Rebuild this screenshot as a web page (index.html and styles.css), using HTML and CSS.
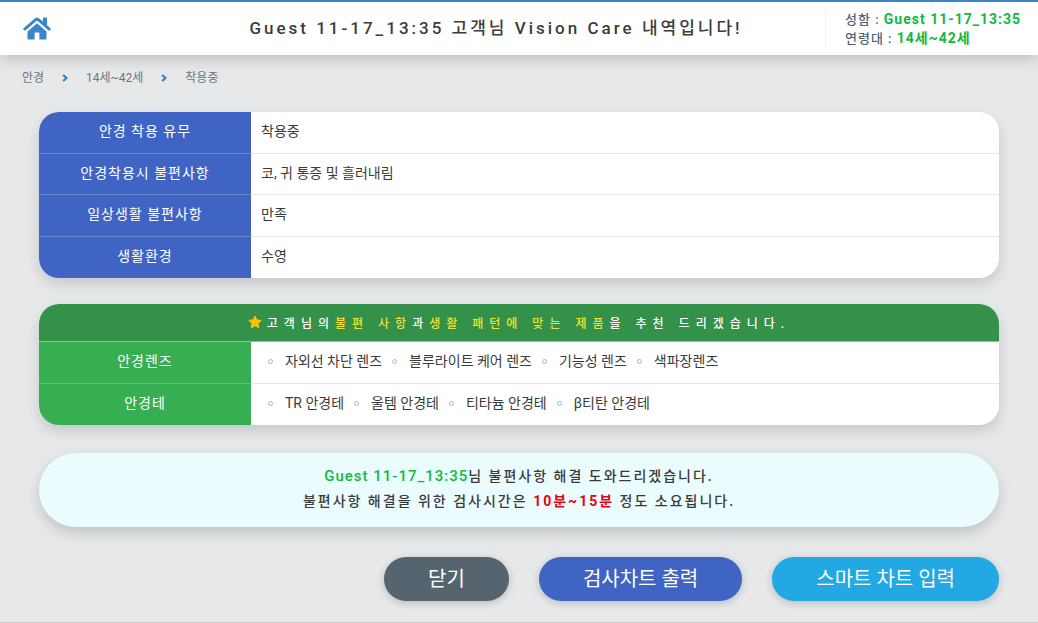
FILE: index.html
```html
<!DOCTYPE html>
<html lang="ko">
<head>
<meta charset="utf-8">
<meta name="viewport" content="width=device-width, initial-scale=1">
<title>Vision Care</title>
<link rel="stylesheet" href="styles.css">
</head>
<body>
<header class="topbar">
  <a class="home" href="#" aria-label="홈">
    <svg viewBox="0 0 28 23" width="28" height="23" aria-hidden="true">
      <path fill="#3a86c8" d="M14 0.5c-.8 0-1.300.2-1.900.7L.5 11.200c-.4.400-.4.800-.1 1.200l.8.900c.3.400.8.400 1.200.1L13.300 4.100c.4-.3 1-.3 1.400 0l10.900 9.300c.4.300.9.300 1.200-.1l.8-.9c.3-.4.300-.8-.1-1.200L24 8.200V1.300c0-.4-.3-.7-.7-.7h-2.600c-.4 0-.7.300-.7.700v3.300L15.900 1.200C15.300.7 14.800.5 14 .5z"/>
      <path fill="#3a86c8" d="M14 6.300 4.500 14.400v7.100c0 .6.400 1 1 1h6.100v-6.300c0-.4.300-.7.700-.7h3.400c.4 0 .7.300.7.700v6.300h6.100c.6 0 1-.4 1-1v-7.100z"/>
    </svg>
  </a>
  <h1 class="title">Guest 11-17_13:35 고객님 Vision Care 내역입니다!</h1>
  <div class="guest">
    <div>성함 : <strong>Guest 11-17_13:35</strong></div>
    <div>연령대 : <strong>14세~42세</strong></div>
  </div>
</header>
<nav class="crumbs" aria-label="경로">
  <a href="#">안경</a>
  <svg class="chevron" viewBox="0 0 6 8" width="6" height="8" aria-hidden="true"><path d="M1.200.9 4.500 4 1.200 7.100"/></svg>
  <a href="#">14세~42세</a>
  <svg class="chevron" viewBox="0 0 6 8" width="6" height="8" aria-hidden="true"><path d="M1.200.9 4.500 4 1.200 7.100"/></svg>
  <a href="#">착용중</a>
</nav>
<main class="content">
  <section class="card">
    <table class="info blue">
      <tbody>
        <tr><th scope="row">안경 착용 유무</th><td>착용중</td></tr>
        <tr><th scope="row">안경착용시 불편사항</th><td>코, 귀 통증 및 흘러내림</td></tr>
        <tr><th scope="row">일상생활 불편사항</th><td>만족</td></tr>
        <tr><th scope="row">생활환경</th><td>수영</td></tr>
      </tbody>
    </table>
  </section>
  <section class="card">
    <h2 class="banner">
      <svg viewBox="0 0 14 14" width="14" height="14" aria-hidden="true"><path fill="#ffc107" stroke="#ffc107" stroke-linejoin="round" d="M7 1l1.800 3.900 4.400.5-3.200 3 .8 4.400L7 10.700l-3.800 2.100.8-4.400-3.200-3 4.400-.5z"/></svg>
      <span>고객님의<em>불편 사항</em>과<em>생활 패턴에 맞는 제품</em>을 추천 드리겠습니다.</span>
    </h2>
    <table class="info green">
      <tbody>
        <tr><th scope="row">안경렌즈</th><td><ul class="options"><li>자외선 차단 렌즈</li><li>블루라이트 케어 렌즈</li><li>기능성 렌즈</li><li>색파장렌즈</li></ul></td></tr>
        <tr><th scope="row">안경테</th><td><ul class="options"><li>TR 안경테</li><li>울템 안경테</li><li>티타늄 안경테</li><li>β티탄 안경테</li></ul></td></tr>
      </tbody>
    </table>
  </section>
  <p class="notice"><strong class="name">Guest 11-17_13:35</strong>님 불편사항 해결 도와드리겠습니다.<br>불편사항 해결을 위한 검사시간은 <strong class="time">10분~15분</strong> 정도 소요됩니다.</p>
  <div class="actions">
    <button type="button" class="close">닫기</button>
    <button type="button" class="print">검사차트 출력</button>
    <button type="button" class="chart">스마트 차트 입력</button>
  </div>
</main>
</body>
</html>
```
FILE: styles.css
```css
*, *::before { box-sizing: border-box; }

body {
  margin: 0;
  min-height: 100vh;
  background: #e6e8ea;
  border-bottom: 1px solid #cbcdd4;
  color: #3a3a3a;
  font-family: Roboto, "Noto Sans CJK KR", sans-serif;
  font-size: 14px;
}

a { color: inherit; text-decoration: none; }

.topbar {
  display: grid;
  grid-template-columns: 167px 1fr 213px;
  align-items: center;
  height: 55px;
  background: #fff;
  border-top: 2px solid #3a86c8;
  box-shadow: 0 4px 14px rgba(0, 0, 0, .18);
}

.home { display: flex; padding-left: 23px; }

.title {
  margin: 0;
  padding-bottom: 4px;
  text-align: center;
  white-space: nowrap;
  color: #3c3c3c;
  font-size: 17px;
  font-weight: 500;
  letter-spacing: 3px;
}

.guest {
  padding-left: 19px;
  border-left: 1px solid #eee;
  color: #566270;
  font-size: 13px;
  font-weight: 500;
  line-height: 18px;
  letter-spacing: 1px;
  white-space: nowrap;
}

.guest strong { color: #0fba3e; font-size: 14px; font-weight: 700; }

.crumbs {
  display: flex;
  align-items: center;
  gap: 18px;
  padding: 13px 22px 0;
  color: #6c757d;
  font-size: 12px;
  line-height: 20px;
}

.chevron { fill: none; stroke: #2f7fc6; stroke-width: 2; }

.content { padding: 24px 39px 20px; }

.card {
  margin-bottom: 26px;
  overflow: hidden;
  border-radius: 20px;
  background: #fff;
  box-shadow: 0 6px 14px rgba(0, 0, 0, .14);
}

.info { width: 100%; border-collapse: collapse; }

.info th, .info td { padding: 0 10px 5px; }

.info th {
  width: 212px;
  color: #fff;
  font-weight: 400;
  letter-spacing: 1px;
}

.info tr + tr td { border-top: 1px solid #e4e5e7; }

.info.blue { height: 166px; }
.info.blue th { background: #4064c4; }
.info.blue tr + tr th { border-top: 1px solid #6a84cc; }

.info.green { height: 83px; }
.info.green th { background: #37ae51; }
.info.green tr + tr th { border-top: 1px solid #62be75; }

.banner {
  display: flex;
  align-items: center;
  justify-content: center;
  gap: 5px;
  height: 38px;
  margin: 0;
  padding-bottom: 1px;
  border-bottom: 1px solid #90bf9a;
  background: #349149;
  color: #fff;
  font-size: 12px;
  font-weight: 500;
  letter-spacing: 6px;
}

.banner em { color: #f0e130; font-style: normal; }

.options {
  display: flex;
  gap: 10px;
  margin: 0;
  padding: 0 0 0 7px;
  list-style: none;
}

.options li { display: flex; align-items: center; gap: 12px; }

.options li::before {
  content: "";
  width: 5px;
  height: 5px;
  margin-top: 2px;
  border: 1px solid #9db8d6;
  border-radius: 50%;
}

.notice {
  margin: 28px 0 30px;
  padding: 11px 20px 13px;
  border-radius: 40px;
  background: #ebfcff;
  box-shadow: 0 6px 14px rgba(0, 0, 0, .16);
  text-align: center;
  font-weight: 500;
  line-height: 25px;
  letter-spacing: 2px;
}

.name { color: #0fba3e; font-size: 15px; font-weight: 500; letter-spacing: 1px; }
.time { color: #e60012; font-weight: 700; }

.actions { display: flex; justify-content: flex-end; gap: 30px; }

.actions button {
  height: 44px;
  padding: 0 44px 1px;
  border: 0;
  border-radius: 22px;
  box-shadow: 0 2px 8px rgba(0, 0, 0, .2);
  color: #fff;
  font: 400 20px/28px Roboto, "Noto Sans CJK KR", sans-serif;
}

.close { background: #566470; }
.print { background: #4064c4; }
.chart { background: #22a8e2; }
```
